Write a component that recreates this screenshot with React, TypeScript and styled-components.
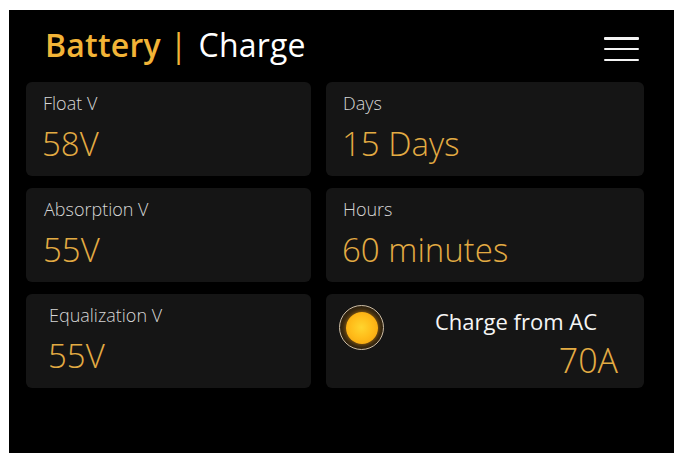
import styled, { createGlobalStyle } from 'styled-components';

const GlobalStyle = createGlobalStyle`
	html, body {
		margin: 0;
		background: #fff;
	}
	body {
		padding: 10px 10px 9px 9px;
		font-family: 'Open Sans', 'Noto Sans', sans-serif;
	}
`;

const lightFont = `'Open Sans Light', 'Open Sans', 'Noto Sans', sans-serif`;

const Screen = styled.div`
	width: 665px;
	height: 443px;
	background: #000;
	box-sizing: border-box;
	display: flex;
	flex-direction: column;
`;

const TopBar = styled.header`
	height: 72px;
	display: flex;
	align-items: center;
	justify-content: space-between;
	padding: 0 35px 0 36px;
	box-sizing: border-box;
`;

const Title = styled.h1`
	margin: -3px 0 0;
	font-size: 32px;
	font-weight: 400;
	color: #fff;
	letter-spacing: 0.2px;
`;

const Accent = styled.span`
	color: #f2b437;
	font-weight: 600;
`;

const Divider = styled.span`
	color: #f2b437;
	margin: 0 11px 0 9px;
`;

const MenuButton = styled.button`
	width: 35px;
	height: 24px;
	padding: 0;
	border: none;
	background: transparent;
	display: flex;
	flex-direction: column;
	justify-content: space-between;
	cursor: pointer;
	margin-top: 6px;
`;

const MenuLine = styled.span`
	display: block;
	height: 2.5px;
	border-radius: 1px;
	background: #f4f4f4;
`;

const Grid = styled.main`
	display: grid;
	grid-template-columns: 285px 318px;
	grid-template-rows: 94px 94px 94px;
	column-gap: 15px;
	row-gap: 12px;
	padding-left: 17px;
`;

const Card = styled.section<{ $inset: number }>`
	background: #151515;
	border-radius: 6px;
	padding: 9px 0 0 ${(p) => p.$inset}px;
	box-sizing: border-box;
	display: flex;
	flex-direction: column;
	gap: 7px;
`;

const Label = styled.div`
	font-family: ${lightFont};
	font-size: 18px;
	font-weight: 300;
	color: #d6d6d6;
	line-height: 1.36;
`;

const Value = styled.div`
	font-family: ${lightFont};
	font-size: 33px;
	font-weight: 300;
	color: #e3ab43;
	line-height: 1.36;
	margin-left: -1px;
`;

const ChargeCard = styled.section`
	background: #151515;
	border-radius: 6px;
	display: flex;
	align-items: flex-start;
	padding: 11px 26px 0 13px;
	box-sizing: border-box;
`;

const Lamp = styled.div`
	width: 45px;
	height: 45px;
	border-radius: 50%;
	box-sizing: border-box;
	border: 1.5px solid #cdbda4;
	background: radial-gradient(circle, #3b2a10 55%, #1c1710 100%);
	display: flex;
	align-items: center;
	justify-content: center;
	flex-shrink: 0;
`;

const LampCore = styled.div`
	width: 32px;
	height: 32px;
	border-radius: 50%;
	background: radial-gradient(circle at 48% 48%, #ffd52e 0%, #ffbd1a 45%, #f59e0b 100%);
	box-shadow: 0 0 4px rgba(255, 170, 20, 0.55);
`;

const ChargeText = styled.div`
	flex: 1;
	display: flex;
	flex-direction: column;
	align-items: flex-end;
	padding-top: 2px;
`;

const ChargeTitle = styled.div`
	font-size: 22px;
	font-weight: 400;
	color: #f6f6f6;
	line-height: 1.36;
	margin-right: 21px;
`;

const ChargeValue = styled.div`
	font-family: ${lightFont};
	font-size: 34px;
	font-weight: 300;
	color: #e3ab43;
	line-height: 1.2;
	margin-top: 3px;
`;

const stats = [
	{ label: 'Float V', value: '58V', inset: 17 },
	{ label: 'Days', value: '15 Days', inset: 17 },
	{ label: 'Absorption V', value: '55V', inset: 18 },
	{ label: 'Hours', value: '60 minutes', inset: 17 },
	{ label: 'Equalization V', value: '55V', inset: 23 },
];

export default function App() {
	return (
		<>
			<GlobalStyle />
			<Screen>
				<TopBar>
					<Title>
						<Accent>Battery</Accent>
						<Divider>|</Divider>
						Charge
					</Title>
					<MenuButton aria-label='Menu'>
						<MenuLine />
						<MenuLine />
						<MenuLine />
					</MenuButton>
				</TopBar>
				<Grid>
					{stats.map((s) => (
						<Card key={s.label} $inset={s.inset}>
							<Label>{s.label}</Label>
							<Value>{s.value}</Value>
						</Card>
					))}
					<ChargeCard>
						<Lamp>
							<LampCore />
						</Lamp>
						<ChargeText>
							<ChargeTitle>Charge from AC</ChargeTitle>
							<ChargeValue>70A</ChargeValue>
						</ChargeText>
					</ChargeCard>
				</Grid>
			</Screen>
		</>
	);
}
